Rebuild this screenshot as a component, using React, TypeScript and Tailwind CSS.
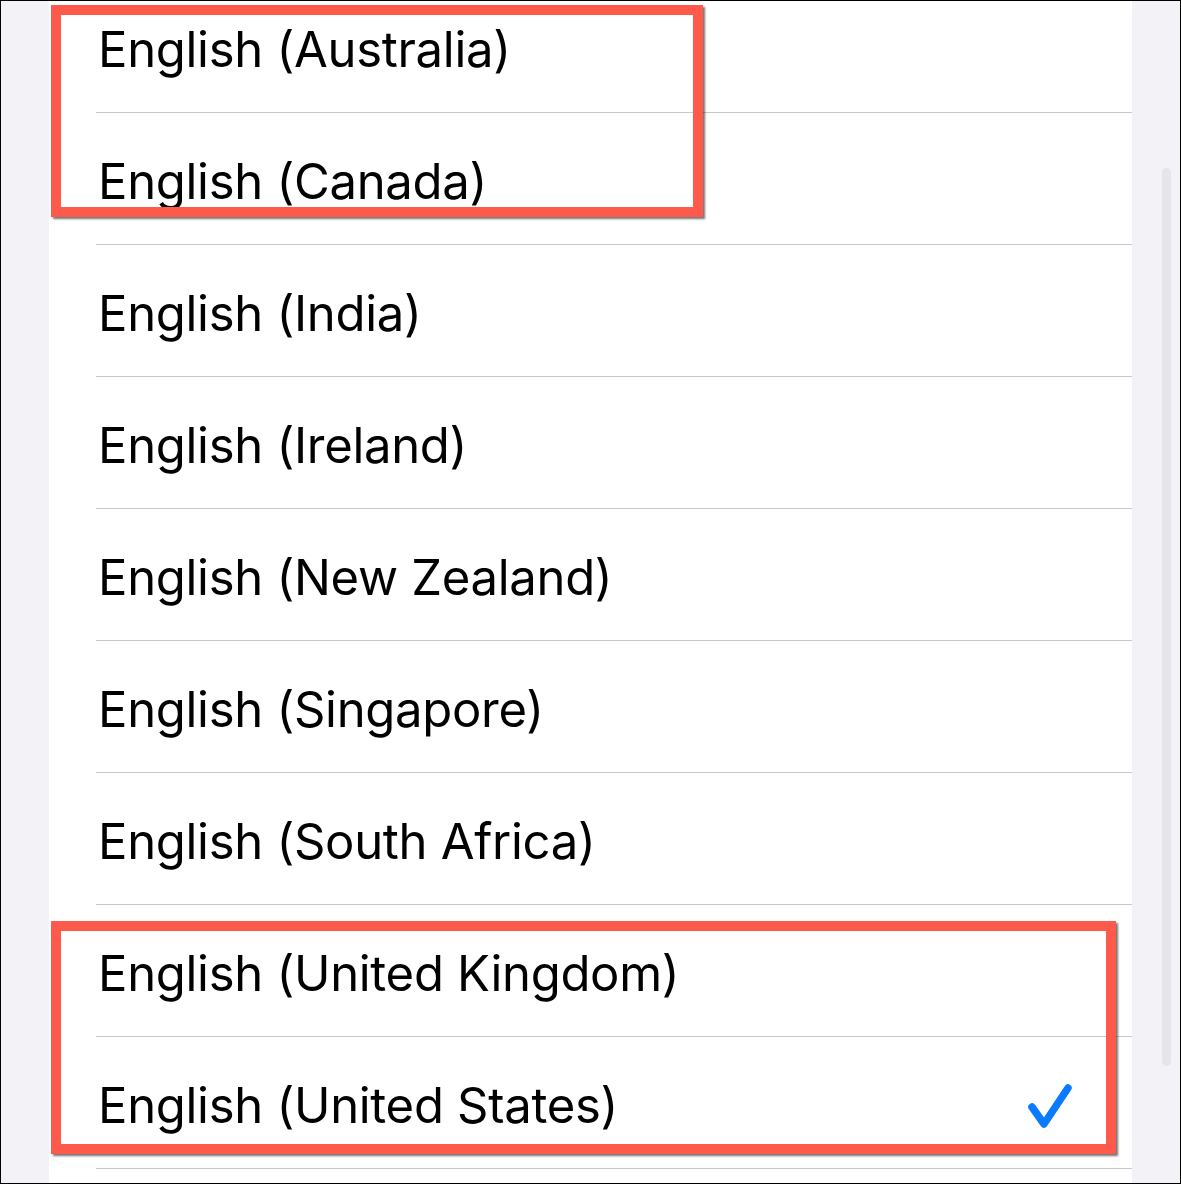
import React from "react";

const items = [
  "English (Australia)",
  "English (Canada)",
  "English (India)",
  "English (Ireland)",
  "English (New Zealand)",
  "English (Singapore)",
  "English (South Africa)",
  "English (United Kingdom)",
  "English (United States)",
];

export default function App() {
  return (
    <div
      className="relative w-[1181px] h-[1184px] overflow-hidden border border-black bg-[#f2f2f7]"
      style={{ fontFamily: "Inter, 'Noto Sans', sans-serif" }}
    >
      <div className="ml-[48px] mt-[-20px] w-[1083px] h-[1300px] bg-white">
        {items.map((t, i) => (
          <div key={t} className="pl-[47px]">
            <div className="h-[132px] flex items-center justify-between border-b border-[#c8c7cc] pr-[60px]">
              <span className="pl-[2px] pt-[5px] text-[49px] leading-none text-black tracking-[-0.3px]">{t}</span>
              {i === items.length - 1 && (
                <svg width="48" height="48" viewBox="0 0 48 48" className="mt-[10px] mr-[-2px]">
                  <path
                    d="M6 23 L18 40 L42 4"
                    fill="none"
                    stroke="#0a7aff"
                    strokeWidth="7.5"
                    strokeLinecap="round"
                    strokeLinejoin="round"
                  />
                </svg>
              )}
            </div>
          </div>
        ))}
      </div>

      {/* scrollbar */}
      <div className="absolute left-[1161px] top-[167px] w-[9px] h-[898px] rounded-full bg-[#e6e5eb]" />

      {/* annotation boxes */}
      <div className="absolute left-[50px] top-[4px] w-[652px] h-[212px] border-[10px] border-[#fe5a4b] shadow-[2px_2px_2px_rgba(0,0,0,0.55)]" />
      <div className="absolute left-[50px] top-[920px] w-[1065px] h-[233px] border-[10px] border-[#fe5a4b] shadow-[2px_2px_2px_rgba(0,0,0,0.55)]" />
    </div>
  );
}
